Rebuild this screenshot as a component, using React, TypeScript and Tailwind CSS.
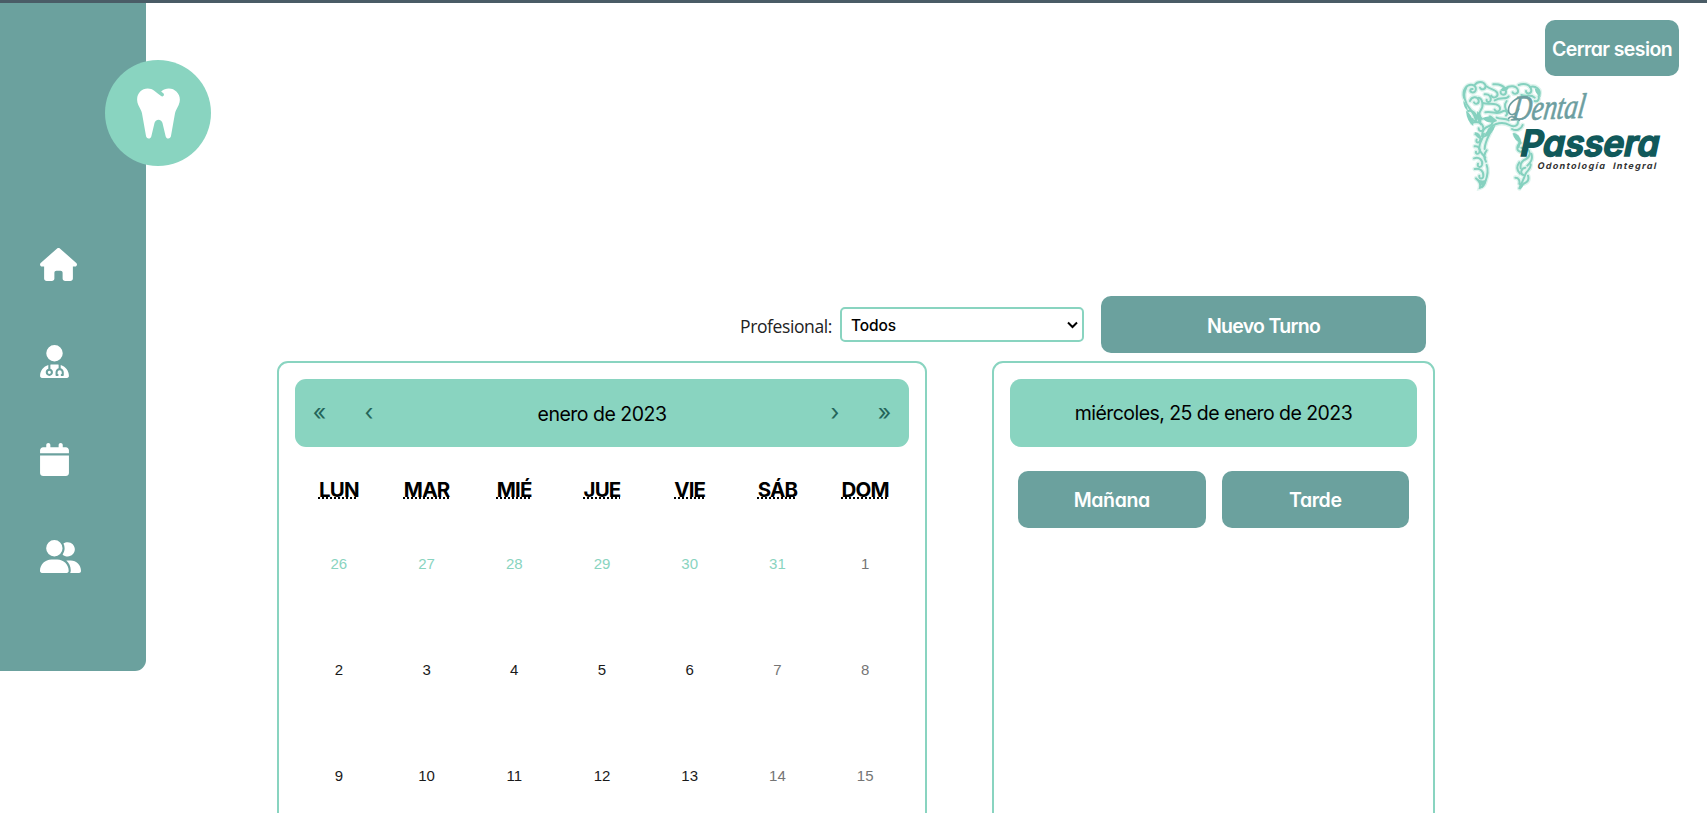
import { FaTooth, FaHouse, FaUserDoctor, FaCalendar, FaUserGroup } from "react-icons/fa6";

const geo = "font-['Inter',sans-serif] [font-feature-settings:'cv11']";
const weekdays = ["LUN", "MAR", "MIÉ", "JUE", "VIE", "SÁB", "DOM"];
const days = [26, 27, 28, 29, 30, 31, 1, 2, 3, 4, 5, 6, 7, 8, 9, 10, 11, 12, 13, 14, 15];

const swirls = [
  "M72 290c-6-22 8-42 26-38c14 4 12 24-2 22c-8-2-6-12 2-10",
  "M104 252c8-12 26-12 32 0c4 12-12 18-16 8",
  "M78 262c-10 20-4 44 12 62c10 12 18 24 18 40",
  "M90 300c4-14 22-16 26-2c2 10-10 14-14 6",
  "M116 290c12 4 16 24 6 38c-6 10-4 20 4 26",
  "M84 330c12-4 26 6 26 22c0 10-12 10-12 2",
  "M140 256c10 10 26 8 32 20c4 12-12 18-18 8",
  "M134 280c14-2 20 8 18 18c-2 8-14 6-12-2",
  "M128 306c18 6 38-4 50 10c8 12-8 22-14 10",
  "M160 250c16-2 36 4 38 22c0 12-18 12-16 0",
  "M196 262c14-10 34-8 38 6c2 10-12 14-16 6",
  "M236 252c18-8 36 0 38 16c0 12-16 12-16 2",
  "M270 258c16-6 34 8 28 24",
  "M244 282c14 6 28-4 40 8M284 300c10 4 14-6 12-14",
  "M164 298c20-12 34 0 42-12M200 300c-8 10-6 26 4 34",
  "M136 334c20-4 36 8 50-2c12-8 20 4 12 12",
  "M96 366c16-8 32 0 34 14c2 12-14 14-14 2",
  "M150 346c14 6 10 26-4 30c-14 4-20 16-20 30",
  "M170 350c12 6 26 0 36 8M146 386c18-22 44-24 62-14c14 8 26 2 26-10",
  "M106 400c12 0 18 10 14 20c-4 8-14 4-10-4",
  "M132 398c-4 18-16 28-14 46c2 12 12 16 18 26",
  "M152 392c-10 20-18 34-18 52",
  "M104 436c12-2 18 8 14 18c-4 8-12 4-10-2",
  "M140 448c-10 12-8 24-2 34M102 472c16-6 28 6 24 20c-4 10-16 6-12-4",
  "M104 504c16-4 28 6 26 22c-2 10-14 8-12-2",
  "M140 492c6 16 2 34-4 50c-2 10-8 16-16 18c4-14-4-22-12-28",
  "M216 384c14 8 28 0 32-12M224 400c12 8 18 24 12 38",
  "M242 426c-12 6-14 22-2 26c10 2 12-10 4-12",
  "M262 444c12 8 8 24-4 30c-14 6-18 16-16 28",
  "M274 458c6 18-4 28-12 36M238 484c-10 14-6 26 2 34",
  "M272 490c2 16-12 18-16 30c-4 14-10 22-18 42M226 530c10 0 14 8 12 18",
  "M256 500c-14 2-16 18-6 22M264 524c4 12-2 20-12 24",
];

const leaves = [
  "M70 300q10 8 14 30q-14-10-14-30z",
  "M78 330q22 10 22 46q-20-16-22-46z",
  "M112 330q18 14 10 44q-16-18-10-44z",
  "M126 352q26-14 46 8q-26 12-46-8z",
  "M104 394q16-2 20 20q-16 0-20-20z",
  "M130 410q10-30 36-36q-8 28-36 36z",
  "M108 532q10 4 20 30q10-16 12-28q-12 10-32-2z",
  "M232 548q10 0 8 18q12-10 14-24q-10 10-22 6z",
  "M180 268q12-16 26-6q-8 14-26 6z",
  "M218 396q22 0 26 30q-22-6-26-30z",
  "M284 262q18 2 18 26q-16-8-18-26z",
];

function Logo() {
  return (
    <svg className="mr-[43px] mt-[3px] h-[112px] w-[204px] overflow-visible" viewBox="60 234 612 336">
      <g fill="none" stroke="#dff4ee" strokeWidth="14" strokeLinecap="round">
        {swirls.map((d) => <path key={d} d={d} />)}
      </g>
      <g fill="none" stroke="#85d1bf" strokeWidth="6" strokeLinecap="round">
        {swirls.map((d) => <path key={d} d={d} />)}
      </g>
      <g fill="#85d1bf">
        {leaves.map((d) => <path key={d} d={d} />)}
      </g>
      <path d="M262 288c-34-4-60 22-56 44c4 16 24 8 30-8M206 352c8-10 22-2 32 6" fill="none" stroke="#6c9ea0" strokeWidth="5" strokeLinecap="round" />
      <text transform="translate(214 358) rotate(-2) skewX(-10)" fontFamily="Liberation Serif, serif" fontStyle="italic" fontSize="106" fill="#6c9ea0" stroke="#6c9ea0" strokeWidth="2" textLength="218" lengthAdjust="spacingAndGlyphs">Dental</text>
      <text transform="translate(236 464) skewX(-12)" className="font-['Inter',sans-serif] [font-feature-settings:'cv11']" fontWeight="600" fontSize="108" letterSpacing="0" fill="#11595a" stroke="#11595a" strokeWidth="5" textLength="416" lengthAdjust="spacingAndGlyphs">Passera</text>
      <text transform="translate(291 504) skewX(-12)" className="font-['Inter',sans-serif] [font-feature-settings:'cv11']" fontWeight="700" fontSize="27" fill="#333" textLength="356" xmlSpace="preserve">Odontología  Integral</text>
    </svg>
  );
}

export default function App() {
  return (
    <div className={`flex h-[813px] w-full items-start overflow-hidden border-t-[3px] border-[#4a5c66] bg-white text-black ${geo}`}>
      <aside className="relative flex h-[667.5px] w-[146px] shrink-0 flex-col rounded-br-[11px] bg-[#6ba19e] pl-[40.2px] pt-[245px] text-white">
        <div className="absolute left-[105.3px] top-[57.3px] flex h-[105.5px] w-[105.5px] items-center justify-center rounded-full bg-[#89d4c0] text-[57px]">
          <FaTooth />
        </div>
        <nav className="flex flex-col gap-[64.4px]">
          <FaHouse className="h-[33px] w-[37px]" />
          <FaUserDoctor className="h-[33px] w-[29px]" />
          <FaCalendar className="h-[33px] w-[29px]" />
          <FaUserGroup className="h-[33px] w-[41px]" />
        </nav>
      </aside>

      <main className="flex flex-1 flex-col">
        <header className="flex h-[293px] flex-col items-end pt-[17px]">
          <button className="mr-[28px] flex h-[56px] w-[134px] items-center justify-center rounded-[10px] bg-[#6ba19e] pt-[3px] text-[19.5px] font-semibold tracking-[-0.6px] text-white">
            Cerrar sesion
          </button>
          <Logo />
        </header>

        <div className="flex h-[57px] items-center justify-end pr-[281px]">
          <label className="mr-[8px] pt-[3px] font-['Open_Sans',sans-serif] text-[17.5px] tracking-[-0.4px] text-[#222]">Profesional:</label>
          <div className="mr-[17px] flex h-[35px] w-[244px] items-center justify-between rounded-[5px] border-2 border-[#89d4c0] pl-[9px] pr-[4px] text-[15.5px] font-medium">
            <span className="pt-[2px] tracking-[-0.1px]">Todos</span>
            <svg className="h-[8px] w-[11px]" viewBox="0 0 11 8" fill="none" stroke="#000" strokeWidth="2"><path d="M1 1.5l4.5 4.5L10 1.5" /></svg>
          </div>
          <button className="flex h-[57px] w-[325px] items-center justify-center rounded-[10px] bg-[#6ba19e] pt-[4px] text-[19.5px] font-semibold tracking-[-0.7px] text-white">
            Nuevo Turno
          </button>
        </div>

        <div className="mt-[8px] flex gap-[65px] pl-[131px]">
          <section className="h-[600px] w-[650px] rounded-[11px] border-2 border-[#89d4c0] p-[16px]">
            <div className="flex h-[68px] items-center rounded-[11px] bg-[#89d4c0] pt-[3px] text-[19.5px]">
              <span className="w-[49px] pb-[4px] text-center text-[23px] text-[#24655a]">«</span>
              <span className="w-[50px] pb-[4px] text-center text-[23px] text-[#24655a]">‹</span>
              <span className="flex-1 text-center tracking-[-0.5px]">enero de 2023</span>
              <span className="w-[50px] pb-[4px] text-center text-[23px] text-[#24655a]">›</span>
              <span className="w-[49px] pb-[4px] text-center text-[23px] text-[#24655a]">»</span>
            </div>
            <div className="grid h-[84px] grid-cols-7 items-center pt-[3px] text-center text-[20.5px] font-bold tracking-[-0.8px]">
              {weekdays.map((d) => (
                <span key={d}><abbr title={d} className="underline decoration-dotted decoration-2 underline-offset-[0px] [text-decoration-skip-ink:none]">{d}</abbr></span>
              ))}
            </div>
            <div className="grid auto-rows-[106.4px] grid-cols-7 text-center font-['Liberation_Sans',sans-serif] text-[15px]">
              {days.map((d, i) => (
                <span key={i} className={i < 6 ? "pt-[21.5px] text-[#89d4c0]" : i % 7 > 4 ? "pt-[21.5px] text-[#757575]" : "pt-[21.5px] text-[#1a1a1a]"}>{d}</span>
              ))}
            </div>
          </section>

          <section className="h-[600px] w-[443px] rounded-[11px] border-2 border-[#89d4c0] p-[16px]">
            <div className="flex h-[68px] items-center justify-center rounded-[11px] bg-[#89d4c0] pt-[2px] text-[19.5px] tracking-[-0.55px]">
              miércoles, 25 de enero de 2023
            </div>
            <div className="mt-[24px] flex gap-[16px] px-[8px] text-[19.5px] font-semibold tracking-[-0.4px] text-white">
              <button className="h-[57px] flex-1 rounded-[10px] bg-[#6ba19e] pt-[3px]">Mañana</button>
              <button className="h-[57px] flex-1 rounded-[10px] bg-[#6ba19e] pt-[3px]">Tarde</button>
            </div>
          </section>
        </div>
      </main>
    </div>
  );
}
